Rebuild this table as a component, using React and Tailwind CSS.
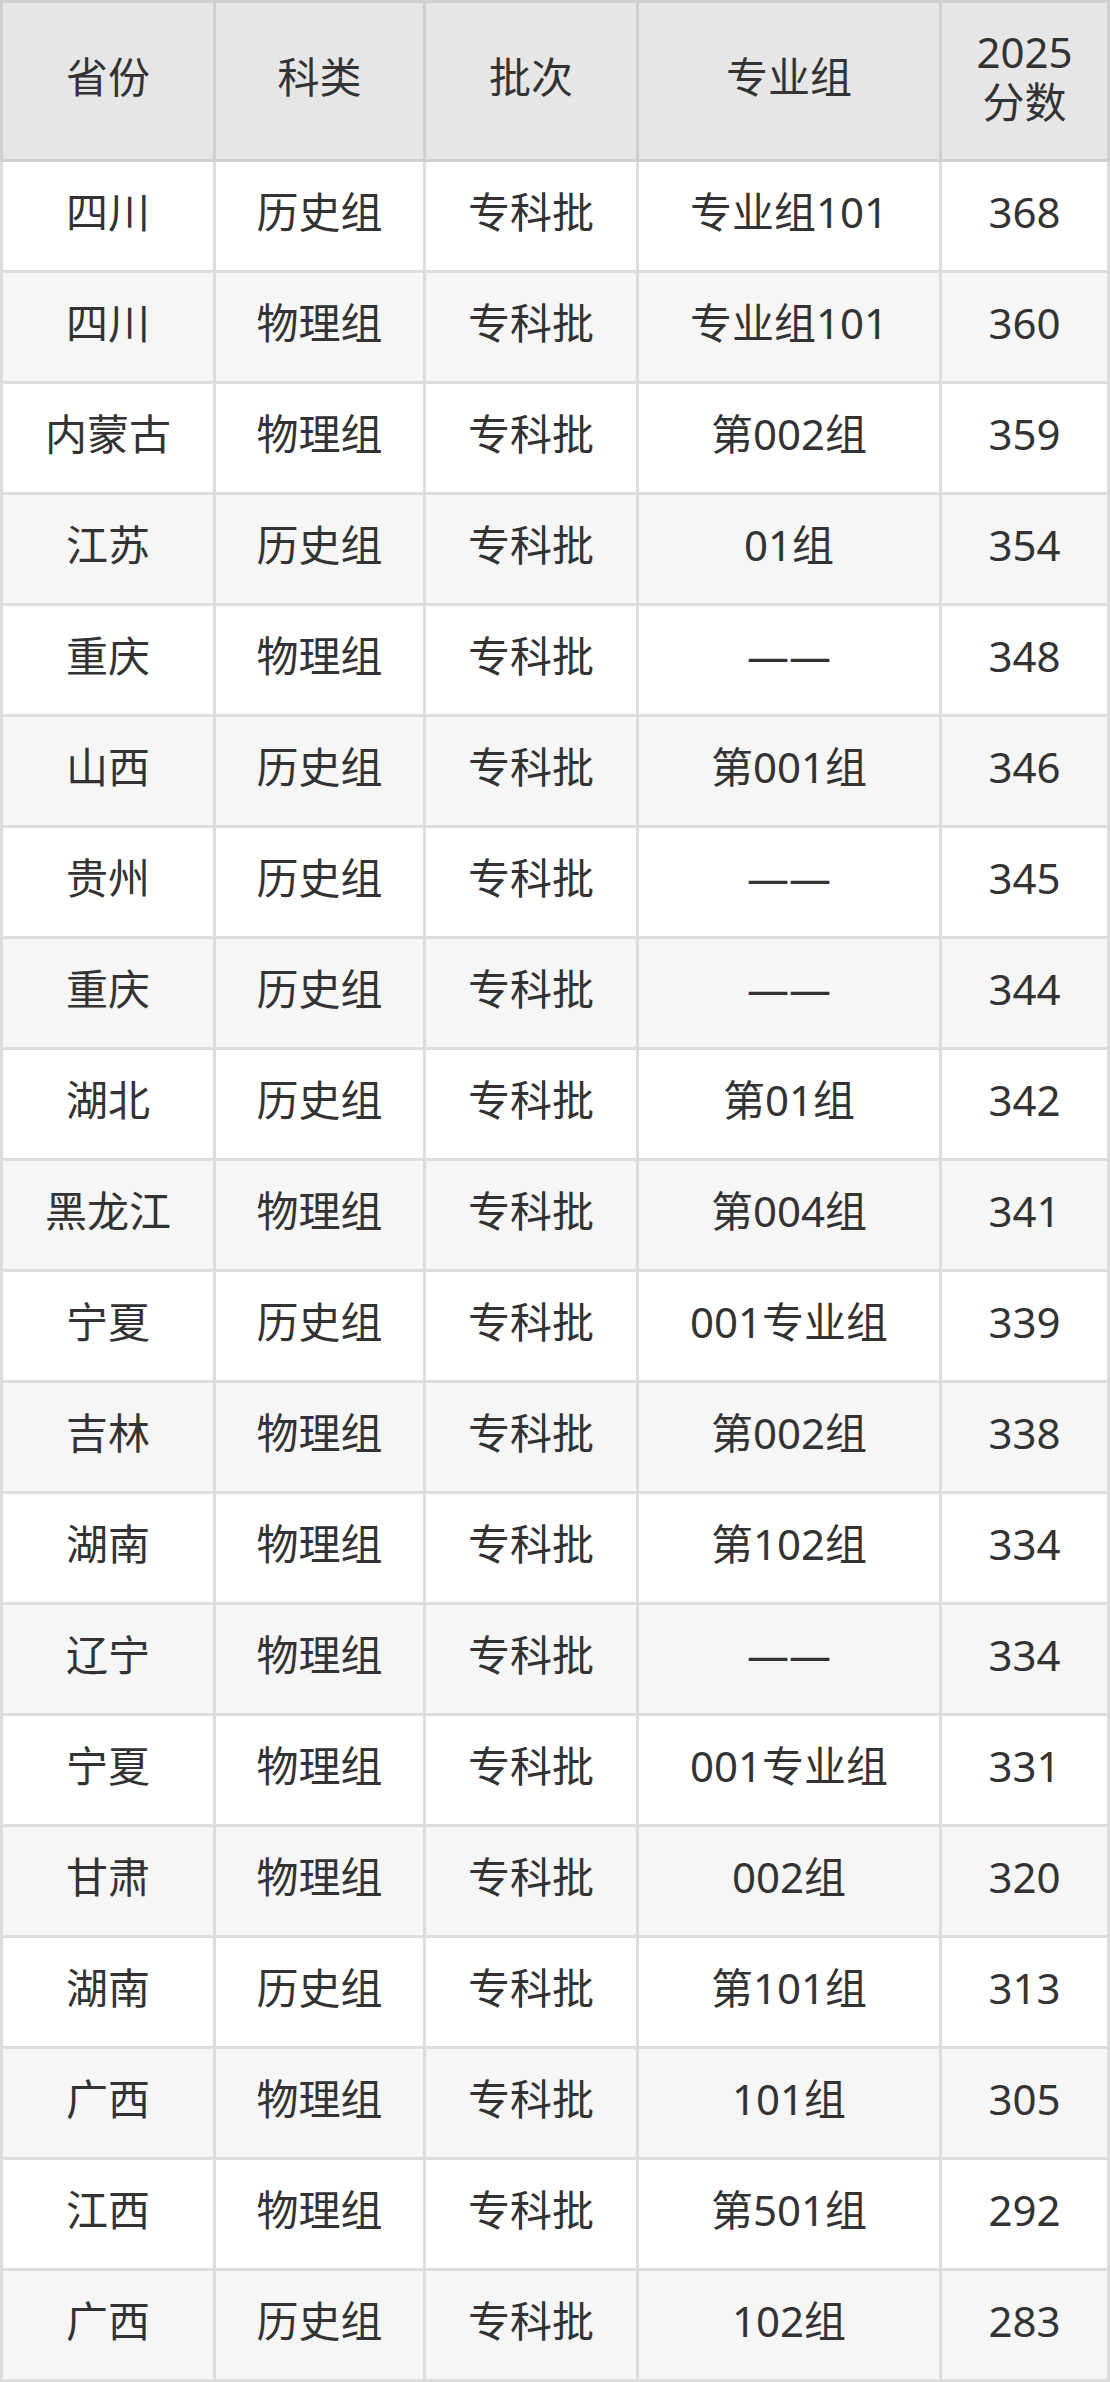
const COLS = ['w-[216px] border-l-[3px]', 'w-[210px]', 'w-[213px]', 'w-[303px]', 'w-[168px]']

const ROWS = [
  ['四川', '历史组', '专科批', '专业组101', '368'],
  ['四川', '物理组', '专科批', '专业组101', '360'],
  ['内蒙古', '物理组', '专科批', '第002组', '359'],
  ['江苏', '历史组', '专科批', '01组', '354'],
  ['重庆', '物理组', '专科批', '——', '348'],
  ['山西', '历史组', '专科批', '第001组', '346'],
  ['贵州', '历史组', '专科批', '——', '345'],
  ['重庆', '历史组', '专科批', '——', '344'],
  ['湖北', '历史组', '专科批', '第01组', '342'],
  ['黑龙江', '物理组', '专科批', '第004组', '341'],
  ['宁夏', '历史组', '专科批', '001专业组', '339'],
  ['吉林', '物理组', '专科批', '第002组', '338'],
  ['湖南', '物理组', '专科批', '第102组', '334'],
  ['辽宁', '物理组', '专科批', '——', '334'],
  ['宁夏', '物理组', '专科批', '001专业组', '331'],
  ['甘肃', '物理组', '专科批', '002组', '320'],
  ['湖南', '历史组', '专科批', '第101组', '313'],
  ['广西', '物理组', '专科批', '101组', '305'],
  ['江西', '物理组', '专科批', '第501组', '292'],
  ['广西', '历史组', '专科批', '102组', '283'],
]

const HEADERS = ['省份', '科类', '批次', '专业组', '2025\n分数']

export default function App() {
  return (
    <div className="w-[1110px] font-['Noto_Sans','Noto_Sans_CJK_SC',sans-serif] text-[42px] text-[#333333]">
      <div className="flex bg-[#e6e6e6]">
        {HEADERS.map((h, i) => (
          <div
            key={h}
            className={`${COLS[i]} h-[162px] pb-[9px] flex items-center justify-center text-center whitespace-pre-line leading-[50px] border-t-[3px] border-b-[3px] border-r-[3px] border-[#d0d0d0]`}
          >
            {h}
          </div>
        ))}
      </div>

      {ROWS.map((row, r) => (
        <div key={r} className={`flex ${r % 2 === 1 ? 'bg-[#f6f6f6]' : 'bg-white'}`}>
          {row.map((cell, i) => (
            <div
              key={i}
              className={`${COLS[i]} h-[111px] pb-[9px] flex items-center justify-center border-b-[3px] border-r-[3px] border-[#dddddd]`}
            >
              {cell}
            </div>
          ))}
        </div>
      ))}
    </div>
  )
}
